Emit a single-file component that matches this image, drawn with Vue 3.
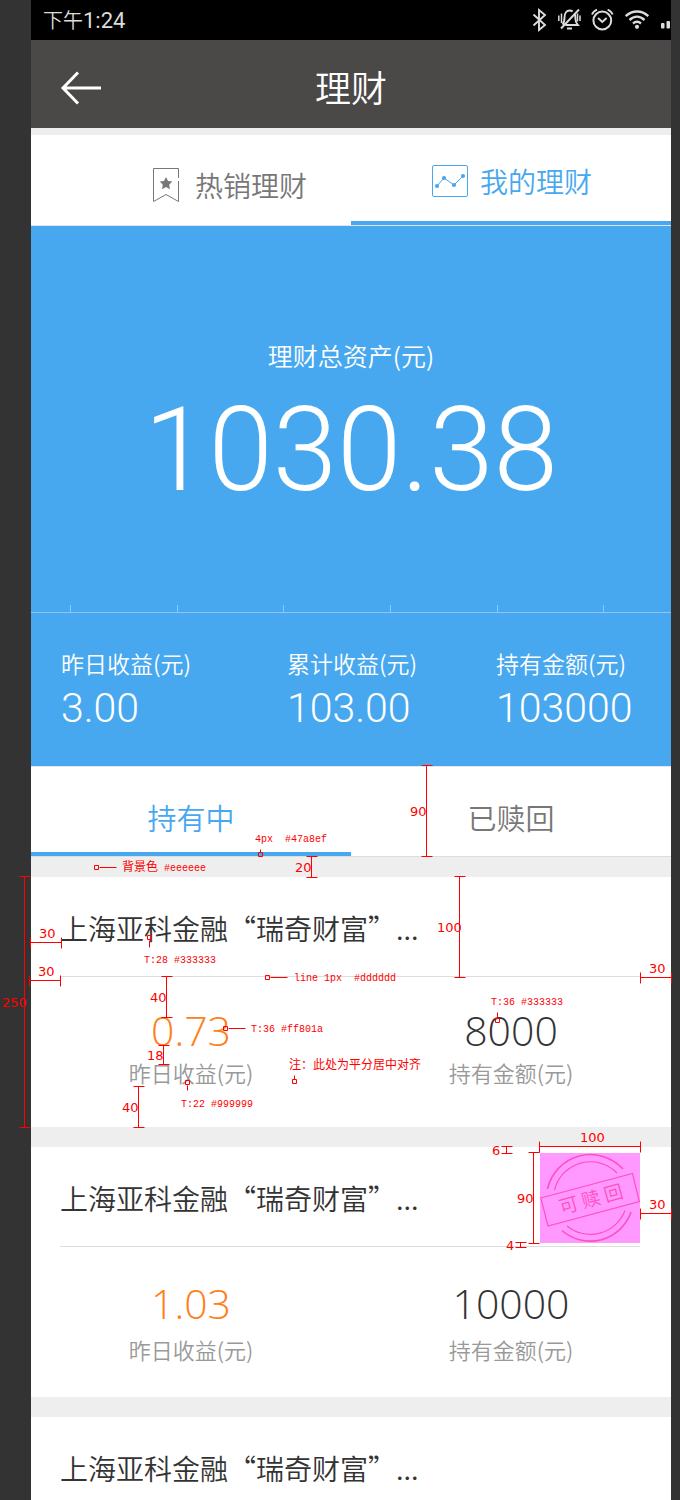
<script setup>
const stats = [
  { label: '昨日收益(元)', value: '3.00' },
  { label: '累计收益(元)', value: '103.00' },
  { label: '持有金额(元)', value: '103000' },
]

const products = [
  { name: '上海亚科金融“瑞奇财富”...', profit: '0.73', amount: '8000', redeemable: false },
  { name: '上海亚科金融“瑞奇财富”...', profit: '1.03', amount: '10000', redeemable: true },
  { name: '上海亚科金融“瑞奇财富”...', redeemable: false },
]

/* Measuring marks: v = vertical ruler, h = horizontal ruler */
const vRulers = [
  { x: 426, y1: 765, y2: 856, cap: 5, text: '90', tx: 410, ty: 816 },
  { x: 311, y1: 856, y2: 877, cap: 5, text: '20', tx: 295, ty: 872 },
  { x: 459, y1: 876, y2: 977, cap: 5, text: '100', tx: 437, ty: 932 },
  { x: 24, y1: 876, y2: 1127, cap: 5, text: '250', tx: 2, ty: 1007 },
  { x: 166, y1: 976, y2: 1017, cap: 5, text: '40', tx: 150, ty: 1002 },
  { x: 163, y1: 1045, y2: 1064, cap: 5, text: '18', tx: 147, ty: 1060 },
  { x: 138, y1: 1086, y2: 1127, cap: 5, text: '40', tx: 122, ty: 1112 },
  { x: 533, y1: 1152, y2: 1243, cap: 5, text: '90', tx: 517, ty: 1203 },
  { x: 506, y1: 1146, y2: 1153, cap: 5, text: '6', tx: 492, ty: 1155 },
  { x: 520, y1: 1242, y2: 1247, cap: 5, text: '4', tx: 506, ty: 1250 },
]
const hRulers = [
  { y: 942, x1: 30, x2: 61, text: '30', tx: 39, ty: 938 },
  { y: 980, x1: 29, x2: 60, text: '30', tx: 38, ty: 976 },
  { y: 977, x1: 640, x2: 671, text: '30', tx: 649, ty: 973 },
  { y: 1146, x1: 539, x2: 640, text: '100', tx: 580, ty: 1142 },
  { y: 1213, x1: 640, x2: 671, text: '30', tx: 649, ty: 1209 },
]
const notes = [
  { bx: 260, by: 854, lx: 260, ly: 849, text: '4px  #47a8ef', tx: 255, ty: 842 },
  { bx: 96, by: 867, lx: 116, ly: 867, cjk: '背景色', text: '#eeeeee', tx: 122, ty: 871 },
  { bx: 149, by: 937, lx: 149, ly: 947, text: 'T:28 #333333', tx: 144, ty: 963 },
  { bx: 267, by: 977, lx: 287, ly: 977, text: 'line 1px  #dddddd', tx: 294, ty: 981 },
  { bx: 225, by: 1028, lx: 245, ly: 1028, text: 'T:36 #ff801a', tx: 251, ty: 1032 },
  { bx: 497, by: 1020, lx: 497, ly: 1012, text: 'T:36 #333333', tx: 491, ty: 1005 },
  { bx: 187, by: 1082, lx: 187, ly: 1090, text: 'T:22 #999999', tx: 181, ty: 1107 },
  { bx: 294, by: 1081, lx: 294, ly: 1075, cjk: '注：此处为平分居中对齐', text: '', tx: 289, ty: 1069 },
]

const vPath = (r) =>
  `M${r.x} ${r.y1}V${r.y2}M${r.x - r.cap} ${r.y1}H${r.x + r.cap + 1}M${r.x - r.cap} ${r.y2}H${r.x + r.cap + 1}`
const hPath = (r) =>
  `M${r.x1} ${r.y}H${r.x2}M${r.x1} ${r.y - 5}V${r.y + 6}M${r.x2} ${r.y - 5}V${r.y + 6}`
const notePath = (n) => {
  const leader = n.ly === n.by
    ? `M${n.bx + 3} ${n.by}H${n.lx}`
    : `M${n.bx} ${n.by + (n.ly > n.by ? 3 : -2)}V${n.ly}`
  return `M${n.bx - 2} ${n.by - 2}h4v4h-4z${leader}`
}
</script>

<template>
  <div class="board">
    <main class="phone">
      <div class="status">
        <span class="clock">下午<span class="clock-digits">1:24</span></span>
        <svg class="status-icons" width="139" height="40" viewBox="532 0 139 40" aria-hidden="true">
          <g fill="none" stroke="#dcdcdc" stroke-width="1.9">
            <path d="M533.500 14.500l11.500 10.500-6 5V10l6 5-11.500 10.500" />
            <path d="M562.500 24.500c1.600-1.600 2-3.500 2-7 0-4 2-7 5-7 1.500 0 2.400.4 3.200 1M575 14.500c.4 1 .4 2.500.4 4 0 3 .6 4.500 2.400 6.500H565.500M561 28.500l18-19" />
            <path d="M567 28.500h5" stroke-width="2" />
            <path d="M558.800 15.500v5.500M561.500 13.500v9.500M580 15.500v5.500M577.500 13.500v8" stroke-width="1.500" />
            <circle cx="602.300" cy="20.500" r="8.900" stroke-width="2" />
            <path d="M598 18l4.300 4 4.300-4M592 14.500c.8-2.200 2.600-4 5-4.900M612.600 14.500c-.8-2.200-2.600-4-5-4.900" />
            <path d="M625.700 16.200c6.600-6.200 16-6.200 22.600 0M629.500 20c4.600-4.300 10.400-4.300 15 0M633 23.500c2.700-2.300 5.300-2.300 8 0" stroke-width="2.400" />
          </g>
          <g fill="#dcdcdc">
            <circle cx="637" cy="26.800" r="2.100" />
            <rect x="661" y="23" width="3.500" height="5.500" rx="1" />
            <rect x="666.500" y="21" width="3.500" height="7.500" rx="1" />
          </g>
        </svg>
      </div>

      <header class="navbar">
        <button class="back" type="button" aria-label="返回">
          <svg width="42" height="34" viewBox="0 0 42 34" aria-hidden="true">
            <path d="M18 1.500L3 17l15 15.500M3 17h38" fill="none" stroke="#fff" stroke-width="3" />
          </svg>
        </button>
        <h1>理财</h1>
      </header>

      <nav class="tabs">
        <button class="tab tab-hot" type="button">
          <svg width="27" height="35" viewBox="0 0 27 35" aria-hidden="true">
            <path d="M25.500 10V.5H.500v33l12.500-7 12.500 7V13" fill="none" stroke="#777" />
            <path d="M13 9l2 4 4.300.6-3.100 3.100.7 4.500-3.900-2.100-3.900 2.100.7-4.500-3.100-3.100 4.300-.6z" fill="#777" />
          </svg>
          <span>热销理财</span>
        </button>
        <button class="tab tab-mine" type="button">
          <svg width="36" height="32" viewBox="0 0 36 32" aria-hidden="true">
            <g fill="none" stroke="#47a8ef">
              <rect x=".5" y=".5" width="35" height="31" rx="1.500" />
              <path d="M5 21l7-8 10 7 9-9" />
            </g>
            <g fill="#47a8ef">
              <circle cx="5" cy="21" r="2.100" /><circle cx="12" cy="13" r="2.100" />
              <circle cx="22" cy="20" r="2.100" /><circle cx="31" cy="11" r="2.100" />
            </g>
          </svg>
          <span>我的理财</span>
        </button>
      </nav>

      <section class="hero">
        <p class="hero-label">理财总资产(元)</p>
        <p class="hero-value">1030.38</p>
        <div class="ticks"><i v-for="n in 6" :key="n"></i></div>
      </section>

      <section class="stats">
        <div v-for="s in stats" :key="s.label">
          <p class="stat-label">{{ s.label }}</p>
          <p class="stat-value">{{ s.value }}</p>
        </div>
      </section>

      <nav class="segments">
        <button class="segment active" type="button">持有中</button>
        <button class="segment" type="button">已赎回</button>
      </nav>

      <section class="list">
        <article v-for="(p, i) in products" :key="i" class="card" :class="{ redeemable: p.redeemable }">
          <h2>{{ p.name }}</h2>
          <div v-if="p.profit" class="figures">
            <div>
              <p class="figure profit">{{ p.profit }}</p>
              <p class="caption">昨日收益(元)</p>
            </div>
            <div>
              <p class="figure">{{ p.amount }}</p>
              <p class="caption">持有金额(元)</p>
            </div>
          </div>
          <svg v-if="p.redeemable" class="stamp" width="100" height="90" viewBox="0 0 100 90">
            <rect width="100" height="90" fill="#ff99ff" />
            <g fill="none" stroke="#ff50c0">
              <path d="M7.500 36A44 44 0 0 1 83 16M22 77.500A43 43 0 0 0 91 59" stroke-width="1.600" />
              <path d="M14.500 37A37 37 0 0 1 77 20M27 73A37 37 0 0 0 85 57.500" stroke-width="1.200" />
              <path d="M.8 45L92.500 20.500 99.300 48.500 8 73z" stroke-width="1.200" />
            </g>
            <text class="stamp-text" x="51" y="53" text-anchor="middle" transform="rotate(-15 51 46)">可 赎 回</text>
          </svg>
        </article>
      </section>
    </main>

    <svg class="marks" width="680" height="1500" viewBox="0 0 680 1500">
      <g class="mark-lines" transform="translate(.5 .5)">
        <path v-for="r in vRulers" :key="r.x + '-' + r.y1" :d="vPath(r)" />
        <path v-for="r in hRulers" :key="r.x1 + '-' + r.y" :d="hPath(r)" />
        <path v-for="n in notes" :key="n.bx" :d="notePath(n)" />
      </g>
      <text v-for="r in [...vRulers, ...hRulers]" :key="r.tx + '-' + r.ty" class="mark-size" :x="r.tx" :y="r.ty">{{ r.text }}</text>
      <text v-for="n in notes" :key="n.tx" class="mark-note" :x="n.tx" :y="n.ty"><tspan v-if="n.cjk" class="mark-cjk">{{ n.cjk }}</tspan><tspan v-if="n.text">{{ n.cjk ? ' ' + n.text : n.text }}</tspan></text>
    </svg>
  </div>
</template>

<style>
body {
  background: #333;
}
</style>

<style scoped>
.board {
  position: relative;
  display: flex;
  min-height: 100vh;
  padding: 0 9px 0 31px;
  box-sizing: border-box;
  background: #333;
  overflow: hidden;
  font-family: "Noto Sans CJK SC DemiLight", "Noto Sans CJK SC", sans-serif;
  font-weight: 350;
}
.phone {
  flex: 1;
  display: flex;
  flex-direction: column;
  background: #eee;
}
p, h1, h2 {
  margin: 0;
  font-weight: 350;
}
button {
  border: 0;
  padding: 0;
  background: none;
  font: inherit;
  cursor: pointer;
}
svg {
  display: block;
}
.status {
  display: flex;
  justify-content: space-between;
  align-items: center;
  height: 40px;
  padding-left: 12px;
  background: #000;
  color: #dcdcdc;
}
.clock {
  font-size: 20px;
  line-height: 40px;
  font-weight: 500;
}
.clock-digits {
  font-family: Roboto, sans-serif;
  font-size: 22px;
  font-weight: 400;
}
.navbar {
  position: relative;
  display: flex;
  align-items: center;
  justify-content: center;
  height: 88px;
  margin-bottom: 7px;
  background: #4b4848;
  color: #fff;
}
.navbar h1 {
  font-size: 36px;
  line-height: 88px;
  padding-top: 4px;
}
.back {
  position: absolute;
  left: 29px;
  top: 31px;
}
.tabs {
  display: grid;
  grid-template-columns: 1fr 1fr;
  height: 90px;
  border-bottom: 1px solid #e0e6ec;
  background: #fff;
}
.tab {
  display: flex;
  align-items: center;
  font-size: 28px;
  line-height: 40px;
}
.tab-hot {
  justify-content: flex-end;
  gap: 15px;
  padding: 10px 44px 0 0;
  color: #777;
}
.tab-mine {
  justify-content: center;
  gap: 12px;
  padding: 6px 0 0 2px;
  border-bottom: 4px solid #47a8ef;
  color: #47a8ef;
}
.hero {
  display: flex;
  flex-direction: column;
  align-items: center;
  height: 387px;
  padding-top: 109px;
  box-sizing: border-box;
  border-bottom: 1px solid #8cc8f5;
  background: #47a8ef;
  color: #fff;
  text-align: center;
}
.hero-label {
  font-size: 25px;
  line-height: 40px;
  font-weight: 400;
}
.hero-value {
  margin-top: 5px;
  font-family: Roboto, sans-serif;
  font-size: 116px;
  line-height: 140px;
  font-weight: 300;
}
.ticks {
  display: grid;
  grid-template-columns: repeat(6, 1fr);
  width: 100%;
  margin-top: auto;
}
.ticks i {
  width: 1px;
  height: 7px;
  margin-left: 39px;
  background: #8cc8f5;
}
.stats {
  display: grid;
  grid-template-columns: 226fr 209fr 175fr;
  height: 153px;
  padding: 30px 0 0 30px;
  box-sizing: border-box;
  background: #47a8ef;
  color: #fff;
}
.stat-label {
  font-size: 23px;
  line-height: 40px;
  font-weight: 400;
}
.stat-value {
  font-family: Roboto, sans-serif;
  font-size: 41px;
  line-height: 50px;
  font-weight: 300;
}
.segments {
  display: grid;
  grid-template-columns: 1fr 1fr;
  height: 91px;
  box-sizing: border-box;
  border-top: 1px solid #e4e8ec;
  border-bottom: 1px solid #ddd;
  background: #fff;
}
.segment {
  padding-top: 14px;
  border-bottom: 4px solid transparent;
  font-size: 29px;
  line-height: 40px;
  color: #777;
}
.segment.active {
  border-color: #47a8ef;
  color: #47a8ef;
}
.list {
  flex: 1;
  display: flex;
  flex-direction: column;
  gap: 20px;
  padding-top: 20px;
}
.card {
  position: relative;
  padding: 0 31px 0 29px;
  background: #fff;
  color: #333;
}
.card h2 {
  padding: 31px 0 28px;
  border-bottom: 1px solid #ddd;
  font-size: 28px;
  line-height: 40px;
  white-space: nowrap;
}
.card:last-child {
  flex: 1;
}
.card:last-child h2 {
  padding-bottom: 0;
  border: 0;
}
.figures {
  display: grid;
  grid-template-columns: 1fr 1fr;
  height: 150px;
  margin: 0 -31px 0 -29px;
  padding-top: 31px;
  box-sizing: border-box;
  text-align: center;
}
.redeemable .figures {
  padding-top: 34px;
}
.redeemable .caption {
  margin-top: 4px;
}
.figure {
  font-family: "Open Sans", sans-serif;
  font-size: 41px;
  line-height: 44px;
}
.profit {
  color: #ff801a;
}
.caption {
  font-size: 22px;
  line-height: 40px;
  color: #999;
}
.stamp {
  position: absolute;
  top: 6px;
  right: 31px;
}
.stamp-text {
  font-size: 19px;
  fill: #ff50c0;
}
.marks {
  position: absolute;
  left: 0;
  top: 0;
  pointer-events: none;
}
.mark-lines {
  fill: none;
  stroke: #f00;
}
.mark-size {
  fill: #f00;
  font: 400 13px "DejaVu Sans", sans-serif;
}
.mark-note {
  fill: #f00;
  font: 400 10px "Liberation Mono", monospace;
  white-space: pre;
}
.mark-cjk {
  font: 400 12px "Noto Sans CJK SC", sans-serif;
}
</style>
